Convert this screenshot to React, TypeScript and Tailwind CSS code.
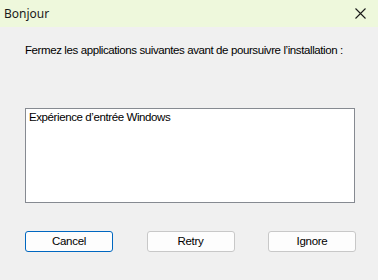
export default function App() {
  return (
    <div className="w-[378px] h-[280px] bg-[#f0f0f0] flex flex-col font-['Liberation_Sans',sans-serif] text-black">
      {/* title bar */}
      <div className="h-[27px] bg-[#eef8dc] flex items-center justify-between pl-[4px] pr-[12px]">
        <span className="text-[12px] text-[#1a1a1a] font-['Noto_Sans',sans-serif]">Bonjour</span>
        <svg width="11" height="11" viewBox="0 0 11 11" className="text-[#1a1a1a]">
          <path d="M0.5 0.5L10.5 10.5M10.5 0.5L0.5 10.5" stroke="currentColor" strokeWidth="1.1" />
        </svg>
      </div>

      <div className="flex flex-col px-[25px] pt-[16px]">
        <p className="text-[11.5px] leading-[14px] tracking-[-0.4px] whitespace-nowrap">
          Fermez les applications suivantes avant de poursuivre l’installation :
        </p>

        <div className="mt-[51px] h-[95px] w-[330px] bg-white border border-[#868a91] px-[3px] pt-[1px]">
          <p className="text-[11.5px] leading-[14px] tracking-[-0.4px]">Expérience d’entrée Windows</p>
        </div>

        <div className="mt-[28px] flex justify-between w-[331px] text-[11.5px] tracking-[-0.3px]">
          <button className="w-[88px] h-[21px] rounded-[3px] border border-[#0067c0] bg-[#fdfdfd]">
            Cancel
          </button>
          <button className="w-[88px] h-[21px] rounded-[3px] border border-[#c8c8c8] bg-[#fdfdfd]">
            Retry
          </button>
          <button className="w-[88px] h-[21px] rounded-[3px] border border-[#c8c8c8] bg-[#fdfdfd]">
            Ignore
          </button>
        </div>
      </div>
    </div>
  );
}
